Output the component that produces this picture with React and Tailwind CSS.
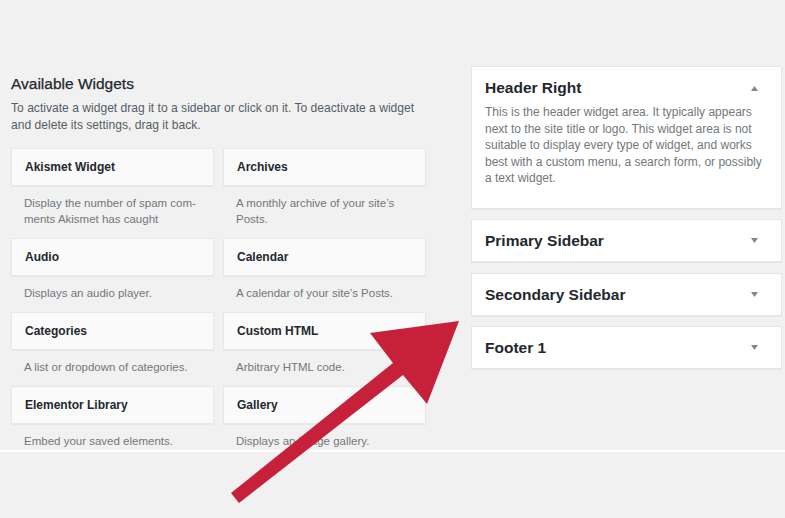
import React from 'react';

const widgets = [
  { name: 'Akismet Widget', desc: 'Display the number of spam com- ments Akismet has caught' },
  { name: 'Archives', desc: "A monthly archive of your site’s Posts." },
  { name: 'Audio', desc: 'Displays an audio player.' },
  { name: 'Calendar', desc: "A calendar of your site’s Posts." },
  { name: 'Categories', desc: 'A list or dropdown of categories.' },
  { name: 'Custom HTML', desc: 'Arbitrary HTML code.' },
  { name: 'Elementor Library', desc: 'Embed your saved elements.' },
  { name: 'Gallery', desc: 'Displays an image gallery.' },
];

const sidebars = ['Primary Sidebar', 'Secondary Sidebar', 'Footer 1'];

const Caret = ({ up }) => (
  <svg width="7" height="5" viewBox="0 0 7 5" className="shrink-0">
    {up ? <path d="M3.5 0 L7 5 L0 5 Z" fill="#82878c" /> : <path d="M0 0 L7 0 L3.5 5 Z" fill="#82878c" />}
  </svg>
);

const Widget = ({ name, desc }) => (
  <div>
    <div className="h-[38px] flex items-center px-[13px] bg-[#fafafa] border border-[#e8e8e8] shadow-[0_1px_1px_rgba(0,0,0,0.04)]">
      <span className="text-[12px] font-bold text-[#23282d]">{name}</span>
    </div>
    <p className="pt-[9px] pb-[11px] pl-[13px] pr-[18px] text-[11.5px] leading-[16px] text-[#72777c]">{desc}</p>
  </div>
);

export default function App() {
  return (
    <div className="relative w-[785px] h-[518px] overflow-hidden bg-[#f1f1f1] font-['Liberation_Sans',Arial,sans-serif]">
      <div className="h-[66px]" />
      <div className="h-[384px] overflow-hidden flex">
        {/* available widgets */}
        <div className="w-[415px] ml-[11px] pt-[8px]">
          <h2 className="text-[15.5px] leading-[20px] text-[#23282d] [-webkit-text-stroke:0.25px_#23282d]">Available Widgets</h2>
          <p className="mt-[6px] text-[12.1px] leading-[17px] text-[#555d66]">
            To activate a widget drag it to a sidebar or click on it. To deactivate a widget and delete its settings, drag it back.
          </p>
          <div className="mt-[14px] grid grid-cols-2 gap-x-[9px]">
            {widgets.map((w) => (
              <Widget key={w.name} {...w} />
            ))}
          </div>
        </div>

        {/* sidebars */}
        <div className="w-[311px] ml-[45px] flex flex-col gap-[10.5px]">
          <div className="bg-white border border-[#e5e5e5] shadow-[0_1px_1px_rgba(0,0,0,0.04)] pl-[13px] pr-[16px] pt-[11px] pb-[21px]">
            <div className="flex items-center justify-between h-[20px] pr-[7px]">
              <h3 className="text-[15.5px] font-bold text-[#23282d]">Header Right</h3>
              <Caret up />
            </div>
            <p className="mt-[6px] text-[12px] leading-[16.6px] text-[#72777c]">
              This is the header widget area. It typically appears next to the site title or logo. This widget area is not suitable to display every type of widget, and works best with a custom menu, a search form, or possibly a text widget.
            </p>
          </div>
          {sidebars.map((s) => (
            <div key={s} className="h-[43px] bg-white border border-[#e5e5e5] shadow-[0_1px_1px_rgba(0,0,0,0.04)] pl-[13px] pr-[23px] flex items-center justify-between">
              <h3 className="text-[15.5px] font-bold text-[#23282d]">{s}</h3>
              <Caret />
            </div>
          ))}
        </div>
      </div>
      <div className="h-[2px] bg-white" />

      {/* red arrow overlay */}
      <svg className="absolute inset-0 pointer-events-none" width="785" height="518" viewBox="0 0 785 518">
        <polygon
          points="459,321 370,333 393,363 231,493 239,503 403,375 427,404"
          fill="#c6203a"
        />
      </svg>
    </div>
  );
}
